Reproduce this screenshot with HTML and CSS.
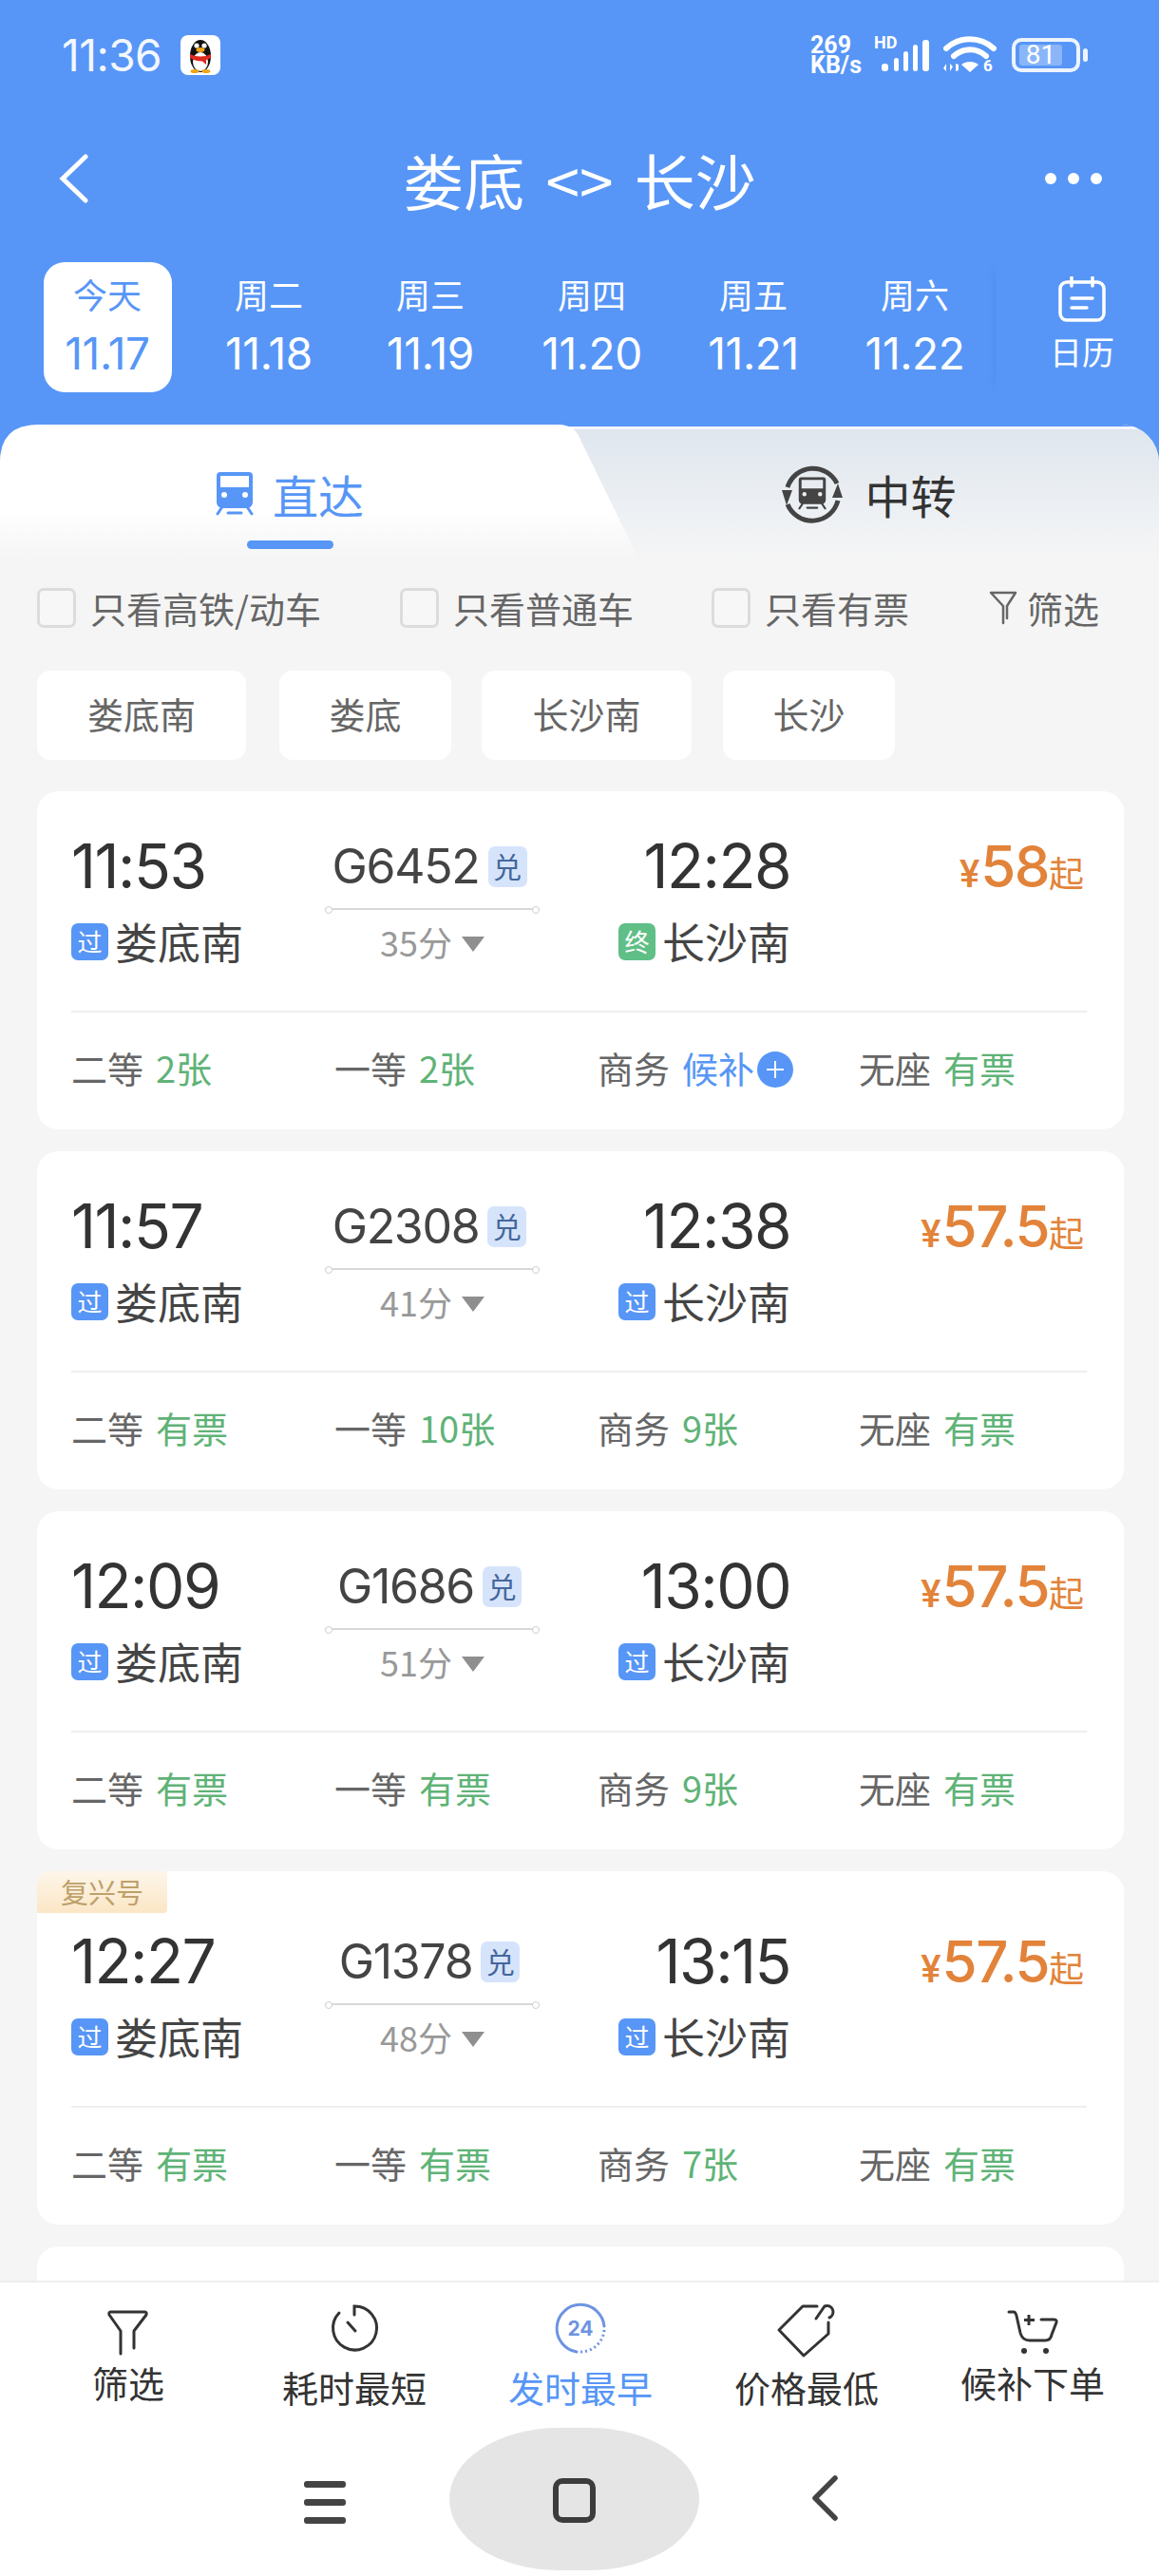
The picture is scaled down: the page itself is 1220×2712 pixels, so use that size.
FILE: index.html
```html
<!DOCTYPE html>
<html lang="zh">
<head>
<meta charset="utf-8">
<title>娄底 &lt;&gt; 长沙</title>
<link rel="stylesheet" href="styles.css">
</head>
<body>
<svg class="defs" width="0" height="0">
  <symbol id="train" viewBox="0 0 40 46">
    <path fill="currentColor" fill-rule="evenodd" d="M5 0h30a4 4 0 0 1 4 4v28a6 6 0 0 1-6 6H7a6 6 0 0 1-6-6V4a4 4 0 0 1 4-4zM5 4v12h30V4zM9 21a3 3 0 1 0 0 6 3 3 0 0 0 0-6zM31 21a3 3 0 1 0 0 6 3 3 0 0 0 0-6z"/>
    <path fill="none" stroke="currentColor" stroke-width="3" stroke-linecap="round" d="M6 38l-4 6M34 38l4 6M13 43h14"/>
  </symbol>
</svg>
<div class="app">
  <header class="top">
    <div class="status">
      <span class="clock">11:36</span>
      <svg class="qq" viewBox="0 0 42 42">
        <rect width="42" height="42" rx="8" fill="#fff"/>
        <ellipse cx="21" cy="22" rx="11" ry="17" fill="#111"/>
        <ellipse cx="21" cy="28" rx="8" ry="10" fill="#fff"/>
        <circle cx="17" cy="11" r="2.6" fill="#fff"/><circle cx="25" cy="11" r="2.6" fill="#fff"/>
        <ellipse cx="21" cy="15.5" rx="4.5" ry="2.4" fill="#f2a516"/>
        <path d="M10 20q11 5 22 0v4q-3 1.500-5 2v5l-4-3.500q-7 0-13-3.500z" fill="#e0281e"/>
        <ellipse cx="15" cy="38" rx="4.500" ry="2" fill="#f2a516"/><ellipse cx="27" cy="38" rx="4.500" ry="2" fill="#f2a516"/>
      </svg>
      <div class="status-right">
        <div class="speed"><span>269</span><span>KB/s</span></div>
        <div class="signal">
          <span class="hd">HD</span>
          <svg class="bars" viewBox="0 0 52 34"><rect x="0" y="25" width="7" height="8" rx="3" fill="#fff"/><rect x="13" y="19" width="5" height="14" rx="2.500" fill="#fff"/><rect x="23" y="12" width="5" height="21" rx="2.500" fill="#fff"/><rect x="33" y="5" width="5" height="28" rx="2.500" fill="#fff"/><rect x="43" y="0" width="7" height="33" rx="3" fill="#fff"/></svg>
        </div>
        <svg class="wifi" viewBox="0 0 56 40">
          <g fill="none" stroke="#fff" stroke-linecap="round"><path stroke-width="6" d="M3 13C17 0 39 0 53 13"/><path stroke-width="6" d="M11 21c10-9 24-9 34 0"/></g>
          <path fill="#fff" d="M19 30c5-4 13-4 18 0l-9 8zM3 29v8l-3-3zM7 37v-8l3 3zM13 29v8l3-1v-6z"/>
          <text x="42" y="37" class="wifi-six">6</text>
        </svg>
        <div class="battery"><span class="battery-level">81</span></div>
        <span class="battery-nub"></span>
      </div>
    </div>
    <div class="titlebar">
      <svg class="back" viewBox="0 0 36 52"><path d="M30 3L6 26l24 23" fill="none" stroke="#fff" stroke-width="5" stroke-linecap="round"/></svg>
      <h1 class="title">娄底 &lt;&gt; 长沙</h1>
      <div class="more"><i></i><i></i><i></i></div>
    </div>
    <div class="dates">
      <div class="date date-on"><span class="date-week">今天</span><span class="date-day">11.17</span></div>
      <div class="date"><span class="date-week">周二</span><span class="date-day">11.18</span></div>
      <div class="date"><span class="date-week">周三</span><span class="date-day">11.19</span></div>
      <div class="date"><span class="date-week">周四</span><span class="date-day">11.20</span></div>
      <div class="date"><span class="date-week">周五</span><span class="date-day">11.21</span></div>
      <div class="date"><span class="date-week">周六</span><span class="date-day">11.22</span></div>
      <div class="calendar">
        <svg class="calendar-icon" viewBox="0 0 50 48"><g fill="none" stroke="#fff" stroke-width="3.500" stroke-linecap="round"><rect x="2" y="6" width="46" height="40" rx="7"/><path d="M14 1v9M36 1v9M14 23h22M14 33h16"/></g></svg>
        <span class="calendar-label">日历</span>
      </div>
    </div>
  </header>

  <main class="body">
    <div class="tabs">
      <div class="tab tab-on">
        <svg class="tab-train"><use href="#train"/></svg>
        <span class="tab-text">直达</span>
        <i class="tab-line"></i>
      </div>
      <div class="tab tab-off">
        <svg class="tab-transfer" viewBox="0 0 64 62">
          <g fill="none" stroke="#444" stroke-width="5"><path d="M58 20A28 28 0 0 0 6 24"/><path d="M6 42A28 28 0 0 0 59 38"/></g>
          <path fill="#444" d="M5 43L0 27h11zM59 20l5 15H53z"/>
          <svg x="17" y="13" width="30" height="35" viewBox="0 0 40 46" color="#444"><use href="#train"/></svg>
        </svg>
        <span class="tab-text">中转</span>
      </div>
    </div>

    <div class="filters">
      <label class="check"><i class="box"></i>只看高铁/动车</label>
      <label class="check"><i class="box"></i>只看普通车</label>
      <label class="check"><i class="box"></i>只看有票</label>
      <div class="filter-btn">
        <svg class="filter-icon" viewBox="0 0 30 36"><path d="M2 2h26l-9 14v13M15 34V16L2 2" fill="none" stroke="#666" stroke-width="2.500" stroke-linejoin="round" stroke-linecap="round"/></svg>筛选
      </div>
    </div>

    <div class="chips">
      <span class="chip">娄底南</span>
      <span class="chip">娄底</span>
      <span class="chip">长沙南</span>
      <span class="chip">长沙</span>
    </div>

    <div class="list">
      <article class="card">
        <div class="route">
          <div class="col-from"><span class="time">11:53</span><div class="station"><i class="badge">过</i>娄底南</div></div>
          <div class="col-train"><div class="train-no">G6452<i class="redeem">兑</i></div><div class="track"></div><div class="duration">35分<i class="caret"></i></div></div>
          <div class="col-to"><span class="time">12:28</span><div class="station"><i class="badge badge-end">终</i>长沙南</div></div>
          <div class="price"><span class="yen">¥</span><span class="amount">58</span><span class="from">起</span></div>
        </div>
        <div class="seats">
          <span class="seat">二等<b>2张</b></span>
          <span class="seat">一等<b>2张</b></span>
          <span class="seat">商务<b class="wait">候补</b><i class="plus"></i></span>
          <span class="seat">无座<b>有票</b></span>
        </div>
      </article>

      <article class="card">
        <div class="route">
          <div class="col-from"><span class="time">11:57</span><div class="station"><i class="badge">过</i>娄底南</div></div>
          <div class="col-train"><div class="train-no">G2308<i class="redeem">兑</i></div><div class="track"></div><div class="duration">41分<i class="caret"></i></div></div>
          <div class="col-to"><span class="time">12:38</span><div class="station"><i class="badge">过</i>长沙南</div></div>
          <div class="price"><span class="yen">¥</span><span class="amount">57.5</span><span class="from">起</span></div>
        </div>
        <div class="seats">
          <span class="seat">二等<b>有票</b></span>
          <span class="seat">一等<b>10张</b></span>
          <span class="seat">商务<b>9张</b></span>
          <span class="seat">无座<b>有票</b></span>
        </div>
      </article>

      <article class="card">
        <div class="route">
          <div class="col-from"><span class="time">12:09</span><div class="station"><i class="badge">过</i>娄底南</div></div>
          <div class="col-train"><div class="train-no">G1686<i class="redeem">兑</i></div><div class="track"></div><div class="duration">51分<i class="caret"></i></div></div>
          <div class="col-to"><span class="time">13:00</span><div class="station"><i class="badge">过</i>长沙南</div></div>
          <div class="price"><span class="yen">¥</span><span class="amount">57.5</span><span class="from">起</span></div>
        </div>
        <div class="seats">
          <span class="seat">二等<b>有票</b></span>
          <span class="seat">一等<b>有票</b></span>
          <span class="seat">商务<b>9张</b></span>
          <span class="seat">无座<b>有票</b></span>
        </div>
      </article>

      <article class="card card-tagged">
        <span class="tag">复兴号</span>
        <div class="route">
          <div class="col-from"><span class="time">12:27</span><div class="station"><i class="badge">过</i>娄底南</div></div>
          <div class="col-train"><div class="train-no">G1378<i class="redeem">兑</i></div><div class="track"></div><div class="duration">48分<i class="caret"></i></div></div>
          <div class="col-to"><span class="time">13:15</span><div class="station"><i class="badge">过</i>长沙南</div></div>
          <div class="price"><span class="yen">¥</span><span class="amount">57.5</span><span class="from">起</span></div>
        </div>
        <div class="seats">
          <span class="seat">二等<b>有票</b></span>
          <span class="seat">一等<b>有票</b></span>
          <span class="seat">商务<b>7张</b></span>
          <span class="seat">无座<b>有票</b></span>
        </div>
      </article>

      <article class="card"></article>
    </div>
  </main>

  <nav class="sortbar">
    <div class="sort sort-short">
      <svg class="sort-icon" viewBox="-10 -12 64 64"><path d="M14 46V22L2 5Q1 2 4 2H39Q42 2 41 5L28 22V40" fill="none" stroke="#333" stroke-width="3" stroke-linecap="round" stroke-linejoin="round"/></svg>
      <span>筛选</span>
    </div>
    <div class="sort">
      <svg class="sort-icon" viewBox="-7 -6 64 64"><path d="M25 11V2A23 23 0 1 1 9 9" fill="none" stroke="#333" stroke-width="3" stroke-linecap="round"/><path d="M18 19l8 9" stroke="#333" stroke-width="3" stroke-linecap="round"/></svg>
      <span>耗时最短</span>
    </div>
    <div class="sort sort-on">
      <svg class="sort-icon" viewBox="-4 -3 64 64">
        <path d="M24 53A25 25 0 1 1 53 26" fill="none" stroke="#6d93e2" stroke-width="3" stroke-linecap="round"/>
        <path d="M53 30A25 25 0 0 1 28 53" fill="none" stroke="#6d93e2" stroke-width="3" stroke-dasharray="2 3"/>
        <text x="28" y="36" text-anchor="middle" class="day-24">24</text>
      </svg>
      <span>发时最早</span>
    </div>
    <div class="sort">
      <svg class="sort-icon" viewBox="-1 0 64 64"><path d="M42 8H27L2 33 28 60 54 37V25" fill="none" stroke="#333" stroke-width="3" stroke-linecap="round" stroke-linejoin="round"/><path d="M41 21l9-13A6 6 0 1 1 55 20" fill="none" stroke="#333" stroke-width="3" stroke-linecap="round"/></svg>
      <span>价格最低</span>
    </div>
    <div class="sort sort-short">
      <svg class="sort-icon" viewBox="-5 -10 64 64"><path d="M2 4H7Q9 4 10 8L14 26Q16 34 24 34H40Q46 34 47 28L52 15Q53 12 49 12H36" fill="none" stroke="#333" stroke-width="3" stroke-linecap="round"/><path d="M23 7V18M18 12.500H29" stroke="#333" stroke-width="3"/><circle cx="18" cy="45" r="3" fill="#333"/><circle cx="41" cy="45" r="3" fill="#333"/></svg>
      <span>候补下单</span>
    </div>
  </nav>

  <footer class="sysnav">
    <div class="sys-menu"><i></i><i></i><i></i></div>
    <div class="sys-pill"><i class="sys-home"></i></div>
    <svg class="sys-back" viewBox="0 0 28 48"><path d="M25 3L4 24l21 21" fill="none" stroke="#444" stroke-width="5.500" stroke-linecap="round" stroke-linejoin="round"/></svg>
  </footer>
</div>
</body>
</html>
```

FILE: styles.css
```css
* { box-sizing: border-box; }
html, body { margin: 0; padding: 0; }
body {
  width: 1220px;
  height: 2712px;
  overflow: hidden;
  font-family: "Noto Sans CJK SC", "Noto Sans", sans-serif;
  color: #333;
}
i { font-style: normal; }
.defs { position: absolute; }

.app {
  width: 1220px;
  height: 2712px;
  display: flex;
  flex-direction: column;
  overflow: hidden;
  background: #5796f6;
}

/* Header */
.top { height: 447px; flex: none; color: #fff; }
.status {
  height: 116px;
  display: flex;
  align-items: center;
  padding: 0 75px 0 65px;
}
.clock { font: 400 46px/1 Inter, Roboto, sans-serif; letter-spacing: -0.5px; opacity: .93; width: 125px; }
.qq { width: 42px; height: 42px; }
.status-right { margin-left: auto; display: flex; align-items: center; position: relative; }
.speed {
  display: flex;
  flex-direction: column;
  font: 700 25px/21px Roboto, sans-serif;
  width: 67px;
}
.signal { position: relative; width: 58px; height: 36px; margin-top: -2px; }
.hd { position: absolute; left: 0; top: -4px; font: 700 18px/20px Roboto, sans-serif; }
.bars { position: absolute; left: 8px; top: 3px; width: 52px; height: 34px; }
.wifi { width: 56px; height: 40px; margin-left: 15px; }
.wifi-six { font: 700 17px Roboto, sans-serif; fill: #fff; }
.battery {
  width: 72px;
  height: 36px;
  margin-left: 16px;
  border: 4px solid #eef4fe;
  border-radius: 10px;
  padding: 3px 15px 3px 4px;
}
.battery-level {
  display: block;
  height: 100%;
  background: #8ab6f9;
  border-radius: 3px;
  text-align: center;
  font: 400 28px/22px Roboto, sans-serif;
}
.battery-nub { width: 5px; height: 14px; margin-left: 3px; background: #eef4fe; border-radius: 3px; }

.titlebar {
  height: 144px;
  display: flex;
  align-items: center;
  justify-content: space-between;
  padding: 0 60px;
  position: relative;
}
.back { width: 36px; height: 52px; }
.title {
  margin: 0;
  position: absolute;
  left: 0;
  right: 0;
  text-align: center;
  font-size: 64px;
  font-weight: 400;
  line-height: 84px;
  word-spacing: 8px;
}
.more { display: flex; gap: 12px; }
.more i { width: 12px; height: 12px; border-radius: 50%; background: #fff; }

.dates {
  margin-top: 16px;
  height: 137px;
  display: flex;
  padding-left: 28px;
}
.date {
  flex: none;
  width: 170px;
  height: 137px;
  display: flex;
  flex-direction: column;
  align-items: center;
  gap: 10px;
  padding-top: 8px;
  position: relative;
}
.date-on::before {
  content: "";
  position: absolute;
  left: 18px;
  top: 0;
  width: 135px;
  height: 137px;
  background: #fff;
  border-radius: 22px;
}
.date-week, .date-day { position: relative; }
.date-week { font-size: 36px; line-height: 50px; }
.date-day { font: 400 46px/56px Inter, Roboto, sans-serif; letter-spacing: -0.4px; }
.date-on { color: #5796f6; }
.calendar {
  flex: none;
  width: 172px;
  display: flex;
  flex-direction: column;
  align-items: center;
  padding: 15px 0 0 10px;
  box-shadow: -6px 0 9px -8px rgba(50, 90, 160, .28);
}
.calendar-icon { width: 50px; height: 48px; }
.calendar-label { font-size: 34px; line-height: 46px; margin-top: 8px; }

/* Body */
.body {
  flex: 1;
  min-height: 0;
  display: flex;
  flex-direction: column;
  background: #f5f5f5;
  border-radius: 40px 40px 0 0;
}
.tabs {
  height: 143px;
  flex: none;
  display: flex;
  position: relative;
  border-radius: 40px 40px 0 0;
  background: linear-gradient(#5796f6 2px, #f4f7fc 2px, #f4f7fc 5px, #dfe6ee 5px, #eef1f4 70%, #f5f5f5 100%);
}
.tab {
  position: relative;
  display: flex;
  align-items: center;
  justify-content: center;
  height: 143px;
  padding-top: 2px;
}
.tab-on { flex: 0 0 610px; color: #5796f6; }
.tab-on::before {
  content: "";
  position: absolute;
  left: 0;
  top: 0;
  width: 673px;
  height: 143px;
  background: linear-gradient(#fff 62%, #f5f5f5 100%);
  clip-path: path("M0 143V40Q0 0 40 0H588Q606 0 612 18L673 143Z");
}
.tab-off { flex: 1; color: #333; }
.tab-train { position: relative; width: 40px; height: 46px; margin-right: 20px; }
.tab-text { position: relative; font-size: 48px; line-height: 60px; }
.tab-line {
  position: absolute;
  left: 260px;
  top: 122px;
  width: 91px;
  height: 9px;
  border-radius: 5px;
  background: #5796f6;
}
.tab-transfer { width: 64px; height: 62px; margin-right: 23px; }

.filters {
  height: 44px;
  margin-top: 28px;
  flex: none;
  display: grid;
  grid-template-columns: 382px 328px 292px 1fr;
  padding-left: 39px;
  font-size: 38px;
  line-height: 40px;
  color: #666;
}
.check, .filter-btn { display: flex; align-items: center; white-space: nowrap; }
.box {
  width: 41px;
  height: 42px;
  margin-right: 15px;
  border: 3px solid #dcdcdc;
  border-radius: 7px;
  background: #f7f7f7;
}
.filter-icon { width: 30px; height: 36px; margin-right: 10px; }

.chips {
  margin-top: 44px;
  height: 94px;
  flex: none;
  display: grid;
  grid-template-columns: 255px 213px 254px 181px;
  padding-left: 39px;
}
.chip {
  height: 94px;
  background: #fff;
  border-radius: 14px;
  display: flex;
  align-items: center;
  justify-content: center;
  padding-bottom: 6px;
  font-size: 38px;
  color: #666;
}
.chip:nth-child(1) { width: 220px; }
.chip:nth-child(2) { width: 181px; }
.chip:nth-child(3) { width: 221px; }

.list {
  margin-top: 33px;
  flex: 1;
  min-height: 0;
  overflow: hidden;
  display: flex;
  flex-direction: column;
  gap: 23px;
  padding: 0 37px 0 39px;
}
.card {
  position: relative;
  flex: none;
  min-height: 200px;
  background: #fff;
  border-radius: 22px;
  padding: 49px 39px 43px 36px;
}
.card-tagged { padding-top: 65px; }
.tag {
  position: absolute;
  left: 0;
  top: 0;
  width: 137px;
  height: 44px;
  border-radius: 14px 0 4px 0;
  background: linear-gradient(#fdf6ea, #fbe6c5);
  color: #bda06a;
  font-size: 29px;
  line-height: 42px;
  text-align: center;
}

.route {
  display: grid;
  grid-template-columns: 267px 226px 264px 312px;
  height: 133px;
}
.time {
  display: block;
  font: 400 64px/60px Inter, Roboto, sans-serif;
  color: #333;
  letter-spacing: -1.5px;
}
.station {
  display: flex;
  align-items: center;
  margin-top: 27px;
  height: 44px;
  font-size: 45px;
  line-height: 44px;
  color: #444;
}
.badge {
  width: 39px;
  height: 39px;
  margin-right: 7px;
  border-radius: 7px;
  background: #5796f6;
  color: #fff;
  font-size: 26px;
  line-height: 38px;
  text-align: center;
}
.badge-end { background: #5fbf86; }
.col-to { display: flex; flex-direction: column; align-items: flex-end; }
.train-no {
  height: 60px;
  display: flex;
  align-items: center;
  justify-content: center;
  padding-right: 6px;
  font: 400 50px/60px Inter, Roboto, sans-serif;
  color: #444;
  letter-spacing: -1.3px;
}
.redeem {
  width: 41px;
  height: 43px;
  margin-left: 9px;
  border-radius: 7px;
  background: #d6e4fb;
  color: #44679c;
  font: 400 30px/41px "Noto Sans CJK SC", sans-serif;
  text-align: center;
  letter-spacing: 0;
}
.track {
  position: relative;
  height: 2px;
  margin-top: 14px;
  background: #d8d8d8;
}
.track::before, .track::after {
  content: "";
  position: absolute;
  top: -2px;
  width: 6px;
  height: 6px;
  border: 1px solid #cfcfcf;
  border-radius: 50%;
  background: #fff;
}
.track::before { left: 0; }
.track::after { right: 0; }
.duration {
  margin-top: 11px;
  height: 44px;
  display: flex;
  align-items: center;
  justify-content: center;
  font-size: 36px;
  color: #999;
}
.caret {
  width: 0;
  height: 0;
  margin: 6px 0 0 10px;
  border-left: 12px solid transparent;
  border-right: 12px solid transparent;
  border-top: 16px solid #8f8f8f;
}
.price {
  display: flex;
  justify-content: flex-end;
  align-items: baseline;
  height: 60px;
  line-height: 60px;
  padding-right: 3px;
  color: #e2833a;
}
.yen { font: 500 40px/60px Roboto, sans-serif; margin-right: 1px; }
.amount { font: 500 60px/60px Inter, Roboto, sans-serif; letter-spacing: -1.5px; }
.from { font-size: 37px; line-height: 60px; }

.seats {
  margin-top: 49px;
  border-top: 2px solid #eeeeee;
  padding-top: 36px;
  display: grid;
  grid-template-columns: 277px 277px 275px 1fr;
}
.seat { display: flex; align-items: center; height: 44px; font-size: 38px; line-height: 44px; color: #666; white-space: nowrap; }
.seat b { font-weight: 400; color: #5fb377; margin-left: 13px; font-size: 38px; }
.seat b.wait { color: #5796f6; }
.plus {
  position: relative;
  width: 38px;
  height: 38px;
  margin: 3px 0 0 3px;
  border-radius: 50%;
  background: #5796f6;
}
.plus::before, .plus::after {
  content: "";
  position: absolute;
  background: #fff;
  left: 10px;
  top: 18px;
  width: 18px;
  height: 2px;
}
.plus::after { left: 18px; top: 10px; width: 2px; height: 18px; }

/* Sort bar */
.sortbar {
  flex: none;
  height: 151px;
  background: #fff;
  border-top: 2px solid #eeeeee;
  display: grid;
  grid-template-columns: repeat(5, 238px);
  padding: 17px 0 0 16px;
  align-items: start;
}
.sort {
  display: flex;
  flex-direction: column;
  align-items: center;
  font-size: 38px;
  line-height: 44px;
  color: #333;
}
.sort-icon { width: 64px; height: 64px; margin-bottom: 7px; }
.sort-short .sort-icon { margin-bottom: 2px; }
.sort-on { color: #5796f6; }
.day-24 { font: 700 21px Inter, Roboto, sans-serif; fill: #6d93e2; }

.sysnav {
  flex: none;
  height: 160px;
  background: #fff;
  display: flex;
  align-items: center;
  padding: 0 0 4px 320px;
}
.sys-menu { display: flex; flex-direction: column; gap: 12px; width: 44px; margin-right: 109px; padding-top: 8px; }
.sys-menu i { height: 7px; border-radius: 3px; background: #444; }
.sys-pill {
  width: 263px;
  height: 150px;
  margin-top: 2px;
  border-radius: 115px / 75px;
  background: #e5e5e5;
  display: flex;
  align-items: center;
  justify-content: center;
}
.sys-home { width: 45px; height: 47px; border: 6px solid #3c3c3c; border-radius: 10px; margin-top: 2px; }
.sys-back { width: 28px; height: 48px; margin-left: 118px; }
```
